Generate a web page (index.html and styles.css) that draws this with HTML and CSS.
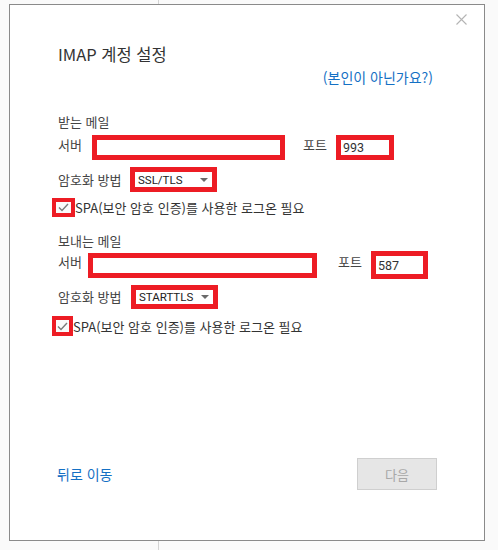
FILE: index.html
```html
<!DOCTYPE html>
<html lang="ko">
<head>
    <meta charset="UTF-8">
    <meta name="viewport" content="width=device-width, initial-scale=1.0">
    <title>IMAP 계정 설정</title>
    <link rel="stylesheet" href="styles.css">
</head>
<body>
    <div class="dialog">
        <div class="dialog-top">
            <button class="close-btn" aria-label="닫기">
                <svg width="11" height="11" viewBox="0 0 11 11"><path d="M0.5 0.5L10.5 10.5M10.5 0.5L0.5 10.5" stroke="#b4b4b4" stroke-width="1.1" fill="none"/></svg>
            </button>
        </div>
        <h1 class="title">IMAP 계정 설정</h1>
        <div class="not-you"><a href="#">(본인이 아닌가요?)</a></div>

        <div class="section-label incoming">받는 메일</div>
        <div class="server-row row-in">
            <span class="label server-label">서버</span>
            <input class="box server-input" type="text">
            <span class="label port-label">포트</span>
            <input class="box port-input" type="text" value="993">
        </div>
        <div class="enc-row enc-in">
            <span class="label">암호화 방법</span>
            <div class="box select">SSL/TLS<span class="arrow"></span></div>
        </div>
        <label class="spa-row spa-in">
            <span class="box checkbox">
                <svg width="11" height="9" viewBox="0 0 11 9"><path d="M1 4.5L4 7.5L10 1" stroke="#7a7a7a" stroke-width="1.4" fill="none"/></svg>
            </span>
            SPA(보안 암호 인증)를 사용한 로그온 필요
        </label>

        <div class="section-label outgoing">보내는 메일</div>
        <div class="server-row row-out">
            <span class="label server-label">서버</span>
            <input class="box server-input" type="text">
            <span class="label port-label">포트</span>
            <input class="box port-input" type="text" value="587">
        </div>
        <div class="enc-row enc-out">
            <span class="label">암호화 방법</span>
            <div class="box select">STARTTLS<span class="arrow"></span></div>
        </div>
        <label class="spa-row spa-out">
            <span class="box checkbox">
                <svg width="11" height="9" viewBox="0 0 11 9"><path d="M1 4.5L4 7.5L10 1" stroke="#7a7a7a" stroke-width="1.4" fill="none"/></svg>
            </span>
            SPA(보안 암호 인증)를 사용한 로그온 필요
        </label>

        <div class="footer">
            <a href="#" class="back-link">뒤로 이동</a>
            <button class="next-btn" disabled>다음</button>
        </div>
    </div>
</body>
</html>
```

FILE: styles.css
```css
body {
    margin: 0;
    height: 550px;
    background: linear-gradient(#d4d4d4, #d4d4d4) 158px 0 / 1px 100% no-repeat, #fafafa;
    font-family: "Noto Sans CJK KR", "Noto Sans", sans-serif;
    font-size: 13px;
    color: #444;
    overflow: hidden;
}
.dialog {
    box-sizing: border-box;
    width: 476px;
    height: 537px;
    margin: 4px 0 0 9px;
    padding: 0 0 0 48px;
    border: 1px solid #8a8a8a;
    background: #fff;
    display: flex;
    flex-direction: column;
}
.dialog-top {
    display: flex;
    justify-content: flex-end;
    height: 37px;
    padding-right: 17px;
}
.close-btn {
    margin-top: 9px;
    width: 11px;
    height: 11px;
    padding: 0;
    border: none;
    background: none;
    display: flex;
}
.title {
    margin: 0;
    font-size: 16.5px;
    font-weight: normal;
    line-height: 24px;
    color: #333;
    height: 26px;
}
.not-you {
    display: flex;
    justify-content: flex-end;
    padding-right: 51px;
    line-height: 18px;
    font-size: 14px;
}
.not-you a, .back-link {
    color: #1470c4;
    text-decoration: none;
}
.section-label {
    line-height: 18px;
}
.incoming {
    margin-top: 27px;
}
.outgoing {
    margin-top: 15px;
}
.label {
    line-height: 18px;
}
.box {
    box-sizing: border-box;
    border: 5px solid #ed1c24;
    background: #fff;
}
.server-row {
    display: flex;
    align-items: center;
}
.server-input, .port-input {
    font-family: Roboto, "Noto Sans CJK KR", sans-serif;
    font-size: 12.5px;
    color: #333;
    padding: 0 0 0 2px;
    margin: 0;
    outline: none;
}
.row-in {
    margin-top: 3px;
    height: 27px;
}
.row-in .server-label {
    width: 34px;
    margin-top: -6px;
}
.row-in .server-input {
    width: 193px;
    height: 25px;
}
.row-in .port-label {
    margin-left: 18px;
    width: 33px;
    margin-top: -6px;
}
.row-in .port-input {
    width: 58px;
    height: 25px;
}
.row-out {
    margin-top: 1px;
    height: 28px;
}
.row-out .server-label {
    width: 30px;
    margin-top: -6px;
}
.row-out .server-input {
    width: 229px;
    height: 25px;
}
.row-out .port-label {
    margin-left: 21px;
    width: 33px;
    margin-top: -6px;
}
.row-out .port-input {
    width: 57px;
    height: 28px;
}
.enc-row {
    display: flex;
    align-items: center;
}
.enc-in {
    margin-top: 6px;
    height: 25px;
}
.enc-in .label {
    width: 72px;
}
.enc-out {
    margin-top: 6px;
    height: 24px;
}
.enc-out .label {
    width: 73px;
}
.select {
    width: 87px;
    height: 100%;
    display: flex;
    align-items: center;
    padding-left: 3px;
    font-family: Roboto, sans-serif;
    font-size: 11.5px;
    color: #222;
    position: relative;
}
.arrow {
    position: absolute;
    right: 4px;
    top: 50%;
    margin-top: -2px;
    border-left: 4px solid transparent;
    border-right: 4px solid transparent;
    border-top: 4px solid #6a6a6a;
}
.spa-row {
    display: flex;
    align-items: center;
    margin-left: -6px;
    color: #333;
}
.spa-in {
    margin-top: 6px;
    height: 19px;
}
.spa-out {
    margin-top: 7px;
    height: 20px;
}
.checkbox {
    border-width: 4px;
    width: 23px;
    height: 100%;
    display: flex;
    align-items: center;
    justify-content: center;
    background: #fafafa;
}
.spa-out .checkbox {
    width: 21px;
}
.footer {
    margin-top: 122px;
    display: flex;
    align-items: center;
    justify-content: space-between;
    padding-right: 47px;
    margin-left: -1px;
}
.back-link {
    font-size: 14px;
}
.next-btn {
    width: 80px;
    height: 32px;
    border: 1px solid #cfcfcf;
    background: #e6e6e6;
    color: #a8a8a8;
    font-family: "Noto Sans CJK KR", sans-serif;
    font-size: 13px;
    padding: 0;
}
```
